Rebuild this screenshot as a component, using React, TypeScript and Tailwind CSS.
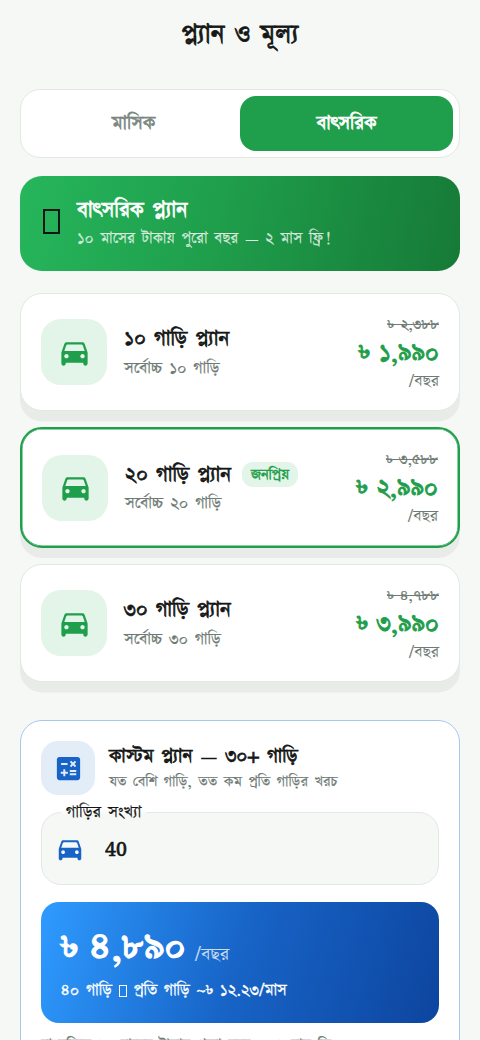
import React, { useState } from 'react';
import { MdCalculate } from 'react-icons/md';

type Billing = 'monthly' | 'yearly';

interface Plan {
  id: string;
  name: string;
  limit: string;
  oldPrice: string;
  price: string;
  popular?: boolean;
}

const plans: Plan[] = [
  { id: 'p10', name: '১০ গাড়ি প্ল্যান', limit: 'সর্বোচ্চ ১০ গাড়ি', oldPrice: '৳ ২,৩৮৮', price: '৳ ১,৯৯০' },
  {
    id: 'p20',
    name: '২০ গাড়ি প্ল্যান',
    limit: 'সর্বোচ্চ ২০ গাড়ি',
    oldPrice: '৳ ৩,৫৮৮',
    price: '৳ ২,৯৯০',
    popular: true,
  },
  { id: 'p30', name: '৩০ গাড়ি প্ল্যান', limit: 'সর্বোচ্চ ৩০ গাড়ি', oldPrice: '৳ ৪,৭৮৮', price: '৳ ৩,৯৯০' },
];

const CarIcon: React.FC<{ className?: string }> = ({ className }) => (
  <svg className={className} viewBox="0 0 24 24" fill="currentColor">
    <path d="M18.92 6.01C18.72 5.42 18.16 5 17.5 5h-11c-.66 0-1.21.42-1.42 1.01L3.11 11.68c-.07.21-.11.43-.11.66v7.16c0 .83.67 1.5 1.5 1.5S6 20.33 6 19.5V19h12v.5c0 .82.67 1.5 1.5 1.5s1.5-.67 1.5-1.5v-7.16c0-.22-.04-.45-.11-.66l-1.97-5.67zM6.5 16c-.83 0-1.5-.67-1.5-1.5S5.67 13 6.5 13s1.5.67 1.5 1.5S7.33 16 6.5 16zm11 0c-.83 0-1.5-.67-1.5-1.5s.67-1.5 1.5-1.5 1.5.67 1.5 1.5-.67 1.5-1.5 1.5zM5 11l1.27-3.82c.14-.4.52-.68.95-.68h9.56c.43 0 .81.28.95.68L19 11H5z" />
  </svg>
);

const Dash: React.FC = () => <span className="mx-[-2px] inline-block origin-center scale-x-75">—</span>;

const PlanCard: React.FC<{ plan: Plan }> = ({ plan }) => (
  <div
    className={
      plan.popular
        ? 'flex h-[121px] items-center rounded-[22px] border-2 border-[#1f9e4b] bg-white px-5 shadow-[inset_0_0_0_0.5px_#1f9e4b,0_10px_0_#e9ebe9]'
        : 'flex h-[118px] items-center rounded-[22px] border border-[#e3e8e5] bg-white px-5 shadow-[0_10.5px_0_#e9ebe9]'
    }
  >
    <div className="flex h-[66px] w-[66px] shrink-0 items-center justify-center rounded-[20px] bg-[#e3f4e9] text-[#1f9e4b]">
      <CarIcon className="h-[35px] w-[35px]" />
    </div>
    <div className="ml-[17px] flex-1 whitespace-nowrap">
      <div className="flex h-[31px] items-center">
        <span className="text-[23.5px] leading-[32px] text-[#151716] [-webkit-text-stroke:0.7px]">{plan.name}</span>
        {plan.popular && (
          <span className="ml-[11px] flex h-[25px] items-center rounded-[11px] bg-[#e3f4e9] px-[9px] text-[17px] text-[#1f9e4b] [-webkit-text-stroke:0.5px]">
            জনপ্রিয়
          </span>
        )}
      </div>
      <div className="h-[26px] text-[18.5px] leading-[28px] text-[#6f7b75] [-webkit-text-stroke:0.2px]">
        {plan.limit}
      </div>
    </div>
    <div className="text-right whitespace-nowrap">
      <div className="h-[23px] text-[17px] leading-[23px] text-[#6f7b75] line-through [-webkit-text-stroke:0.2px]">
        {plan.oldPrice}
      </div>
      <div className="h-[34px] text-[28px] leading-[36px] text-[#1f9e4b] [-webkit-text-stroke:0.9px]">{plan.price}</div>
      <div className="h-[22px] text-[18.5px] leading-[24px] text-[#6f7b75]">/বছর</div>
    </div>
  </div>
);

const App: React.FC = () => {
  const [billing, setBilling] = useState<Billing>('yearly');
  const [carCount, setCarCount] = useState('40');

  const tabClass = (value: Billing) =>
    billing === value
      ? 'flex-1 rounded-2xl bg-[#1f9e4b] text-[22px] text-white [-webkit-text-stroke:0.7px]'
      : 'flex-1 rounded-2xl text-[22px] text-[#7b8781] [-webkit-text-stroke:0.6px]';

  return (
    <div className="h-[1040px] w-[480px] overflow-hidden bg-[#f5f8f5] px-5 font-['FreeSerif','Tiro_Bangla','Noto_Serif_Bengali',serif] text-[#151716] [word-spacing:0.15em]">
      <h1 className="flex h-[89px] items-start justify-center pt-[15px] text-[30px] leading-[40px] [-webkit-text-stroke:0.8px]">
        প্ল্যান ও মূল্য
      </h1>

      <div className="flex h-[69px] rounded-[20px] border border-[#e3e8e5] bg-white p-[6px]">
        <button type="button" className={tabClass('monthly')} onClick={() => setBilling('monthly')}>
          মাসিক
        </button>
        <button type="button" className={tabClass('yearly')} onClick={() => setBilling('yearly')}>
          বাৎসরিক
        </button>
      </div>

      <div className="mt-[18px] flex h-[95px] items-center rounded-[22px] bg-linear-[102deg,#26b65c,#1f9e4b_45%,#167a37] pl-[23px] text-white">
        <span className="-mt-[4px] h-[25px] w-[17px] border-2 border-[#151716]" />
        <div className="ml-[17px] whitespace-nowrap">
          <div className="h-[30px] text-[24.5px] leading-[31px] [-webkit-text-stroke:0.7px]">বাৎসরিক প্ল্যান</div>
          <div className="h-[27px] text-[17.7px] leading-[28px] text-white/75 [-webkit-text-stroke:0.2px]">
            ১০ মাসের টাকায় পুরো বছর <Dash /> ২ মাস ফ্রি!
          </div>
        </div>
      </div>

      <div className="mt-[22px] flex flex-col gap-4">
        {plans.map((plan) => (
          <PlanCard key={plan.id} plan={plan} />
        ))}
      </div>

      <div className="mt-[38px] h-[400px] rounded-[22px] border-[1.3px] border-[#a9c8f0] bg-white px-[20px] pt-[20px]">
        <div className="flex h-[54px] items-center">
          <div className="flex h-[54px] w-[54px] items-center justify-center rounded-[17px] bg-[#e3edf8]">
            <MdCalculate className="h-[31px] w-[31px] text-[#1763c6]" />
          </div>
          <div className="ml-[14px] whitespace-nowrap">
            <div className="h-[27px] text-[21.7px] leading-[28px] [-webkit-text-stroke:0.7px]">
              কাস্টম প্ল্যান <Dash /> ৩০+ গাড়ি
            </div>
            <div className="h-[24px] text-[17px] leading-[24px] text-[#6f7b75] [-webkit-text-stroke:0.2px]">
              যত বেশি গাড়ি, তত কম প্রতি গাড়ির খরচ
            </div>
          </div>
        </div>

        <label className="relative mt-[17px] flex h-[73px] items-center rounded-[20px] border border-[#e3e8e5] bg-[#f5f8f5] pl-[13px]">
          <span className="absolute -top-[13px] left-[19px] h-[28px] px-[5px] text-[19px] leading-[26px] whitespace-nowrap">
            <span className="absolute top-[11px] left-0 h-[3px] w-full bg-[#f9fbf9]" />
            <span className="relative [-webkit-text-stroke:0.2px]">গাড়ির সংখ্যা</span>
          </span>
          <CarIcon className="h-[30px] w-[30px] text-[#1763c6]" />
          <input
            className="ml-[20px] w-[200px] bg-transparent pt-[4px] font-['Noto_Serif_Bengali','Noto_Serif',serif] text-[19.5px] outline-none [-webkit-text-stroke:0.6px]"
            value={carCount}
            onChange={(e) => setCarCount(e.target.value)}
          />
        </label>

        <div className="mt-[17px] h-[121px] rounded-[18px] bg-linear-[107deg,#2f9bff,#1763c6_50%,#0d459f] px-5 pt-[20px] whitespace-nowrap text-white">
          <div className="flex h-[54px] items-baseline leading-[54px]">
            <span className="text-[42.5px] [-webkit-text-stroke:1.3px]">৳ ৪,৮৯০</span>
            <span className="ml-[9px] text-[21px] text-white/75">/বছর</span>
          </div>
          <div className="flex h-[30px] items-center text-[18.3px] [-webkit-text-stroke:0.3px]">
            ৪০ গাড়ি
            <span className="mx-[7px] inline-block h-[12px] w-[8px] border border-white" />
            প্রতি গাড়ি ~৳ ১২.২৩/মাস
          </div>
        </div>

        <p className="mt-[10px] text-[16.7px] leading-[24px] whitespace-nowrap text-[#6f7b75] [-webkit-text-stroke:0.3px]">
          বাৎসরিকে ১০ মাসের টাকায় পুরো বছর <Dash /> ২ মাস ফ্রি
        </p>
      </div>
    </div>
  );
};

export default App;
